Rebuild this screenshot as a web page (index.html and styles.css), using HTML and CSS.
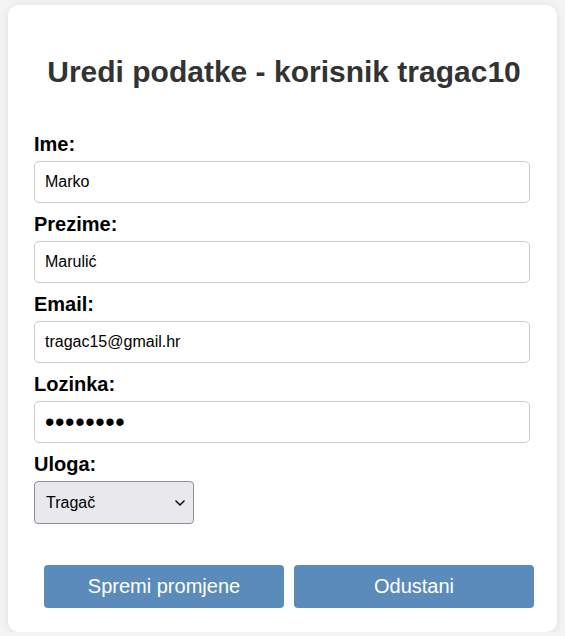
FILE: index.html
```html
<!DOCTYPE html>
<html lang="hr">
<head>
<meta charset="utf-8">
<title>Uredi podatke</title>
<link rel="stylesheet" href="styles.css">
</head>
<body>
<div class="card">
  <h1 class="title">Uredi podatke - korisnik tragac10</h1>
  <form class="form">
    <label class="label" for="ime">Ime:</label>
    <input class="field" id="ime" type="text" value="Marko">
    <label class="label" for="prezime">Prezime:</label>
    <input class="field" id="prezime" type="text" value="Marulić">
    <label class="label" for="email">Email:</label>
    <input class="field" id="email" type="email" value="tragac15@gmail.hr">
    <label class="label" for="lozinka">Lozinka:</label>
    <input class="field field-pass" id="lozinka" type="password" value="12345678">
    <label class="label" for="uloga">Uloga:</label>
    <div class="select-wrap">
      <select class="select" id="uloga">
        <option>Tragač</option>
        <option>Admin</option>
      </select>
      <svg class="chevron" width="10" height="6" viewBox="0 0 10 6"><path d="M1 1 L5 5 L9 1" fill="none" stroke="#111" stroke-width="1.6" stroke-linecap="round" stroke-linejoin="round"/></svg>
    </div>
    <div class="actions">
      <button class="btn" type="button">Spremi promjene</button>
      <button class="btn" type="button">Odustani</button>
    </div>
  </form>
</div>
</body>
</html>
```
FILE: styles.css
```css
html, body {
  margin: 0;
  padding: 0;
}
body {
  background: #f4f4f4;
  font-family: "Liberation Sans", Arial, sans-serif;
  color: #000;
}
.card {
  margin: 5px 8px 0 8px;
  background: #fff;
  border-radius: 11px;
  box-shadow: 0 1px 10px rgba(0, 0, 0, 0.09);
  padding: 50px 27px 24px 26px;
  box-sizing: border-box;
  height: 627px;
}
.title {
  margin: 0 0 44px 0;
  padding-left: 4px;
  font-size: 30px;
  line-height: 34px;
  font-weight: bold;
  color: #333;
  text-align: center;
}
.form {
  display: flex;
  flex-direction: column;
}
.label {
  display: block;
  font-size: 20px;
  line-height: 23px;
  font-weight: bold;
  margin-bottom: 5px;
}
.field {
  width: 100%;
  box-sizing: border-box;
  height: 42px;
  margin: 0 0 10px 0;
  padding: 0 10px;
  border: 1px solid #ccc;
  border-radius: 5px;
  font-family: "Liberation Sans", Arial, sans-serif;
  font-size: 16px;
  color: #000;
  background: #fff;
  outline: none;
}
.field-pass {
  font-size: 27px;
  letter-spacing: 0.6px;
}
.select-wrap {
  position: relative;
  width: 160px;
  height: 43px;
}
.select {
  appearance: none;
  -webkit-appearance: none;
  width: 160px;
  height: 43px;
  box-sizing: border-box;
  padding: 0 10px 0 11px;
  border: 1px solid #8f8f9d;
  border-radius: 4px;
  background: #e9e9ed;
  font-family: "Liberation Sans", Arial, sans-serif;
  font-size: 16px;
  color: #000;
}
.chevron {
  position: absolute;
  left: 141px;
  top: 19px;
  pointer-events: none;
}
.actions {
  display: flex;
  gap: 10px;
  margin: 41px -4px 0 10px;
}
.btn {
  width: 240px;
  height: 43px;
  border: none;
  border-radius: 4px;
  background: #5b8bba;
  color: #fff;
  font-family: "Liberation Sans", Arial, sans-serif;
  font-size: 20px;
  padding: 0;
}
```
